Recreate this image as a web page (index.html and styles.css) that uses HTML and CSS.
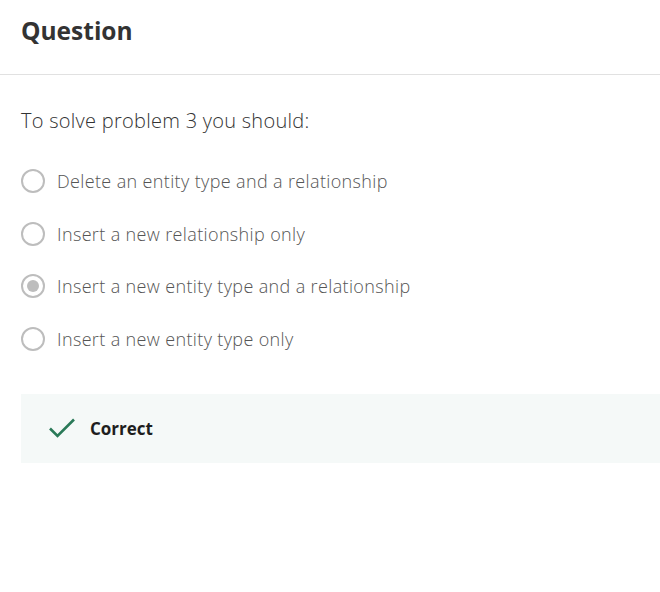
FILE: index.html
```html
<!DOCTYPE html>
<html>
<head>
<meta charset="utf-8">
<link rel="stylesheet" href="styles.css">
</head>
<body>
<div class="page">
  <header class="header">
    <h1 class="title">Question</h1>
  </header>
  <main class="content">
    <p class="prompt">To solve problem 3 you should:</p>
    <ul class="options">
      <li class="option"><span class="radio"></span><span class="label">Delete an entity type and a relationship</span></li>
      <li class="option"><span class="radio"></span><span class="label">Insert a new relationship only</span></li>
      <li class="option"><span class="radio checked"></span><span class="label">Insert a new entity type and a relationship</span></li>
      <li class="option"><span class="radio"></span><span class="label">Insert a new entity type only</span></li>
    </ul>
    <div class="feedback">
      <svg class="check" width="28" height="22" viewBox="0 0 28 22"><path d="M2 11.5 L9.5 19 L26 2.5" fill="none" stroke="#2a7a58" stroke-width="2.6"/></svg>
      <span class="feedback-text">Correct</span>
    </div>
  </main>
</div>
</body>
</html>
```

FILE: styles.css
```css
html, body {
  margin: 0;
  padding: 0;
  background: #fff;
}
body {
  font-family: "Open Sans", "Noto Sans", sans-serif;
  color: #333;
  overflow: hidden;
}
.page {
  width: 660px;
}
.header {
  height: 75px;
  border-bottom: 1px solid #e1e1e1;
  box-sizing: border-box;
  padding: 13px 21px 0;
}
.title {
  margin: 0;
  font-size: 24.5px;
  font-weight: 700;
  color: #333;
  line-height: 36px;
}
.content {
  padding: 32px 0 0 21px;
}
.prompt {
  margin: 0;
  font-size: 20px;
  font-weight: 300;
  letter-spacing: 0.27px;
  line-height: 28px;
  color: #333;
}
.options {
  list-style: none;
  margin: 34px 0 0;
  padding: 0;
  display: flex;
  flex-direction: column;
  gap: 28.5px;
}
.option {
  display: flex;
  align-items: center;
  gap: 12px;
  height: 24px;
}
.radio {
  width: 24px;
  height: 24px;
  box-sizing: border-box;
  border: 2px solid #bdbdbd;
  border-radius: 50%;
  display: flex;
  align-items: center;
  justify-content: center;
  flex: none;
}
.radio.checked::after {
  content: "";
  width: 12px;
  height: 12px;
  border-radius: 50%;
  background: #bdbdbd;
}
.label {
  font-size: 18px;
  font-weight: 300;
  letter-spacing: 0.36px;
  color: #555;
  line-height: 24px;
}
.feedback {
  margin-top: 43px;
  height: 69px;
  background: #f5f9f8;
  display: flex;
  align-items: center;
  padding-left: 27px;
  gap: 14px;
}
.check {
  display: block;
}
.feedback-text {
  font-size: 17px;
  font-weight: 700;
  color: #1e1e1e;
}
```
